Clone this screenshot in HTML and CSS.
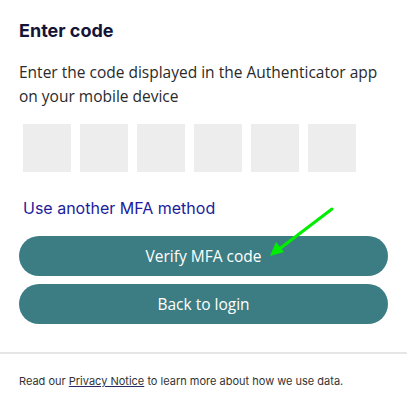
FILE: index.html
```html
<!DOCTYPE html>
<html>
<head>
<meta charset="utf-8">
<link rel="stylesheet" href="styles.css">
</head>
<body>
<main class="card">
  <h1 class="title">Enter code</h1>
  <p class="desc">Enter the code displayed in the Authenticator app on your mobile device</p>
  <div class="inset">
    <div class="code-row">
      <input class="digit" type="text" maxlength="1">
      <input class="digit" type="text" maxlength="1">
      <input class="digit" type="text" maxlength="1">
      <input class="digit" type="text" maxlength="1">
      <input class="digit" type="text" maxlength="1">
      <input class="digit" type="text" maxlength="1">
    </div>
    <a class="alt-link" href="#">Use another MFA method</a>
  </div>
  <div class="actions">
    <button class="btn btn-verify">Verify MFA code
      <svg class="arrow" width="80" height="60" viewBox="0 0 80 60">
        <line x1="70" y1="3" x2="16" y2="44" stroke="#00ee00" stroke-width="3" stroke-linecap="round"/>
        <polygon points="8,50 14,36 22,46" fill="#00ee00"/>
      </svg>
    </button>
    <button class="btn">Back to login</button>
  </div>
</main>
<footer class="footer">
  <p>Read our <a href="#">Privacy Notice</a> to learn more about how we use data.</p>
</footer>
</body>
</html>
```
FILE: styles.css
```css
html, body {
  margin: 0;
  padding: 0;
  background: #fff;
}
body {
  width: 407px;
  height: 408px;
  overflow: hidden;
}
.card {
  padding: 20px 19px 0 19px;
}
.title {
  margin: 0;
  font-family: Inter, sans-serif;
  font-weight: 700;
  font-size: 18px;
  line-height: 22px;
  color: #141437;
}
.desc {
  margin: 18px 0 0;
  font-family: "Open Sans", sans-serif;
  font-size: 15.5px;
  line-height: 24px;
  color: #2a2a2a;
}
.inset {
  padding: 0 4px;
}
.code-row {
  display: flex;
  gap: 9px;
  margin-top: 16px;
}
.digit {
  width: 48px;
  height: 48px;
  box-sizing: border-box;
  border: none;
  background: #ededed;
  margin: 0;
  padding: 0;
}
.alt-link {
  display: block;
  margin-top: 24px;
  font-family: Inter, sans-serif;
  font-size: 16px;
  line-height: 24px;
  color: #1c1c9c;
  text-decoration: none;
}
.actions {
  display: flex;
  flex-direction: column;
  gap: 8px;
  margin-top: 16px;
}
.btn {
  position: relative;
  height: 40px;
  border: none;
  border-radius: 20px;
  background: #3c7d83;
  color: #fff;
  font-family: "Open Sans", sans-serif;
  font-size: 15.5px;
  padding: 0;
}
.arrow {
  position: absolute;
  left: 243px;
  top: -30px;
}
.footer {
  margin-top: 28px;
  border-top: 2px solid #e6e6e6;
  padding: 19px 19px 0;
}
.footer p {
  margin: 0;
  font-family: Inter, sans-serif;
  font-size: 11px;
  line-height: 16px;
  color: #333;
}
.footer a {
  color: #333;
  text-decoration: underline;
  text-decoration-color: #2a2a6a;
}
```
